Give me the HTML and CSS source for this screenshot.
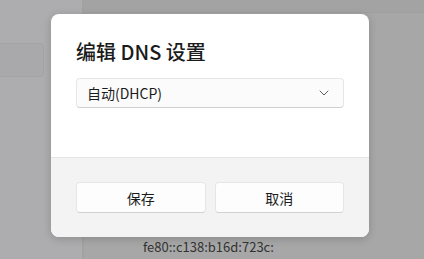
FILE: index.html
```html
<!DOCTYPE html>
<html lang="zh-CN">
<head>
    <meta charset="UTF-8">
    <title>编辑 DNS 设置</title>
    <link rel="stylesheet" href="styles.css">
</head>
<body>

<div class="backdrop">
    <div class="sidebar">
        <div class="side-item"></div>
    </div>
    <div class="main">
        <div class="top-strip"></div>
        <div class="address">fe80::c138:b16d:723c:</div>
    </div>
</div>

<div class="dialog">
    <div class="dialog-body">
        <h2 class="dialog-title">编辑 DNS 设置</h2>
        <div class="select">
            <span>自动(DHCP)</span>
            <svg class="chevron" width="10" height="6" viewBox="0 0 10 6">
                <path d="M1 1 L5 5 L9 1" fill="none" stroke="#5c5c5c" stroke-width="1" stroke-linecap="round" stroke-linejoin="round"/>
            </svg>
        </div>
    </div>
    <div class="dialog-footer">
        <button class="btn">保存</button>
        <button class="btn">取消</button>
    </div>
</div>

</body>
</html>
```

FILE: styles.css
```css
body {
    margin: 0;
    width: 424px;
    height: 259px;
    overflow: hidden;
    font-family: "Noto Sans CJK SC", "Noto Sans", sans-serif;
    background-color: #a7a7a7;
}

.backdrop {
    display: flex;
    height: 259px;
}

.sidebar {
    width: 84px;
    background-color: #adadaf;
    border-right: 2px solid #a2a2a4;
    padding-top: 43px;
    box-sizing: border-box;
}

.side-item {
    width: 44px;
    height: 34px;
    background-color: #a9a9ab;
    border: 1px solid #a4a4a6;
    border-left: none;
    border-radius: 0 4px 4px 0;
    box-sizing: border-box;
}

.main {
    flex: 1;
    display: flex;
    flex-direction: column;
}

.top-strip {
    height: 12px;
    background-color: #a3a3a3;
    border-bottom: 1px solid #9f9f9f;
}

.address {
    margin-top: auto;
    margin-left: 59px;
    margin-bottom: 3px;
    font-size: 13px;
    line-height: 19px;
    color: #333333;
}

.dialog {
    position: absolute;
    left: 51px;
    top: 14px;
    width: 318px;
    height: 223px;
    background: #ffffff;
    border-radius: 8px;
    overflow: hidden;
    box-shadow: 0 2px 8px rgba(0, 0, 0, 0.18);
    display: flex;
    flex-direction: column;
}

.dialog-body {
    padding: 23px 25px 0;
    height: 143px;
    box-sizing: border-box;
}

.dialog-title {
    margin: 0 0 12px;
    font-size: 20px;
    font-weight: 500;
    line-height: 29px;
    color: #1b1b1b;
}

.select {
    display: flex;
    align-items: center;
    justify-content: space-between;
    height: 30px;
    padding: 0 14px 0 10px;
    background: #fbfbfb;
    border: 1px solid #e6e6e6;
    border-bottom-color: #d0d0d0;
    border-radius: 4px;
    box-sizing: border-box;
    font-size: 14px;
    color: #1b1b1b;
}

.dialog-footer {
    flex: 1;
    display: flex;
    gap: 9px;
    padding: 24px 25px 0;
    background: #f3f3f3;
    border-top: 1px solid #e5e5e5;
}

.btn {
    width: 130px;
    height: 31px;
    background: #fdfdfd;
    border: 1px solid #e6e6e6;
    border-bottom-color: #d2d2d2;
    border-radius: 4px;
    font-family: inherit;
    font-size: 14px;
    color: #1b1b1b;
    padding: 0;
}
```
